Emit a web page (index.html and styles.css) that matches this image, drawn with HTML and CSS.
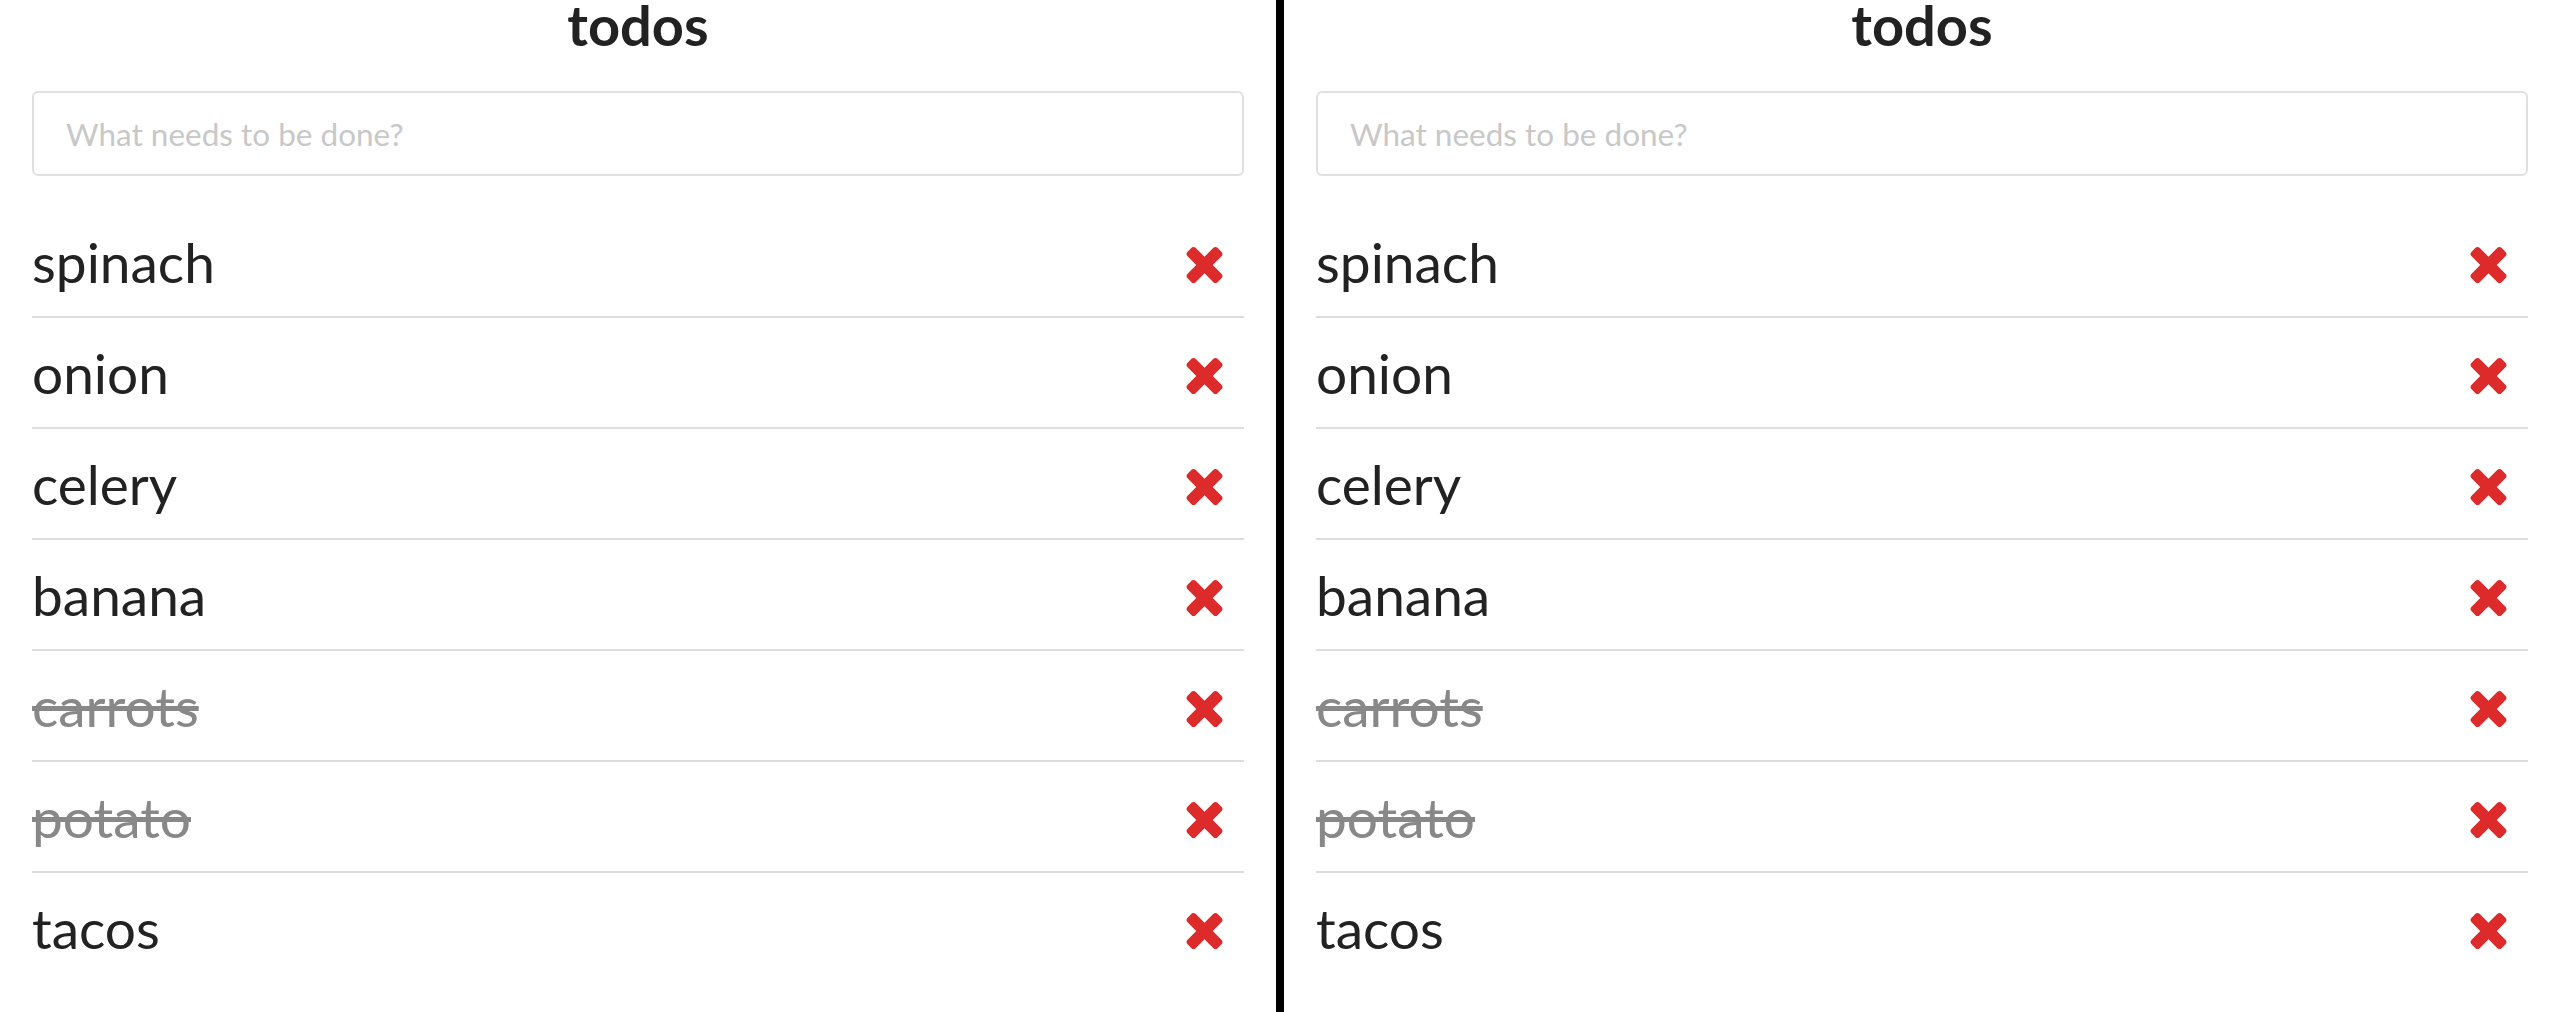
FILE: index.html
```html
<!DOCTYPE html>
<html>
<head>
<meta charset="utf-8">
<link rel="stylesheet" href="styles.css">
</head>
<body>
<section class="panel panel-left">
  <div class="app">
    <h1 class="title">todos</h1>
    <input class="new-todo" type="text" placeholder="What needs to be done?">
    <ul class="todo-list">
      <li class="todo"><span class="label">spinach</span><button class="destroy"><svg viewBox="110 366 1188 1188" width="37" height="36"><path d="M1298 1322q0 40-28 68l-136 136q-28 28-68 28t-68-28l-294-294-294 294q-28 28-68 28t-68-28l-136-136q-28-28-28-68t28-68l294-294-294-294q-28-28-28-68t28-68l136-136q28-28 68-28t68 28l294 294 294-294q28-28 68-28t68 28l136 136q28 28 28 68t-28 68l-294 294 294 294q28 28 28 68z"/></svg></button></li>
      <li class="todo"><span class="label">onion</span><button class="destroy"><svg viewBox="110 366 1188 1188" width="37" height="36"><path d="M1298 1322q0 40-28 68l-136 136q-28 28-68 28t-68-28l-294-294-294 294q-28 28-68 28t-68-28l-136-136q-28-28-28-68t28-68l294-294-294-294q-28-28-28-68t28-68l136-136q28-28 68-28t68 28l294 294 294-294q28-28 68-28t68 28l136 136q28 28 28 68t-28 68l-294 294 294 294q28 28 28 68z"/></svg></button></li>
      <li class="todo"><span class="label">celery</span><button class="destroy"><svg viewBox="110 366 1188 1188" width="37" height="36"><path d="M1298 1322q0 40-28 68l-136 136q-28 28-68 28t-68-28l-294-294-294 294q-28 28-68 28t-68-28l-136-136q-28-28-28-68t28-68l294-294-294-294q-28-28-28-68t28-68l136-136q28-28 68-28t68 28l294 294 294-294q28-28 68-28t68 28l136 136q28 28 28 68t-28 68l-294 294 294 294q28 28 28 68z"/></svg></button></li>
      <li class="todo"><span class="label">banana</span><button class="destroy"><svg viewBox="110 366 1188 1188" width="37" height="36"><path d="M1298 1322q0 40-28 68l-136 136q-28 28-68 28t-68-28l-294-294-294 294q-28 28-68 28t-68-28l-136-136q-28-28-28-68t28-68l294-294-294-294q-28-28-28-68t28-68l136-136q28-28 68-28t68 28l294 294 294-294q28-28 68-28t68 28l136 136q28 28 28 68t-28 68l-294 294 294 294q28 28 28 68z"/></svg></button></li>
      <li class="todo done"><span class="label">carrots</span><button class="destroy"><svg viewBox="110 366 1188 1188" width="37" height="36"><path d="M1298 1322q0 40-28 68l-136 136q-28 28-68 28t-68-28l-294-294-294 294q-28 28-68 28t-68-28l-136-136q-28-28-28-68t28-68l294-294-294-294q-28-28-28-68t28-68l136-136q28-28 68-28t68 28l294 294 294-294q28-28 68-28t68 28l136 136q28 28 28 68t-28 68l-294 294 294 294q28 28 28 68z"/></svg></button></li>
      <li class="todo done"><span class="label">potato</span><button class="destroy"><svg viewBox="110 366 1188 1188" width="37" height="36"><path d="M1298 1322q0 40-28 68l-136 136q-28 28-68 28t-68-28l-294-294-294 294q-28 28-68 28t-68-28l-136-136q-28-28-28-68t28-68l294-294-294-294q-28-28-28-68t28-68l136-136q28-28 68-28t68 28l294 294 294-294q28-28 68-28t68 28l136 136q28 28 28 68t-28 68l-294 294 294 294q28 28 28 68z"/></svg></button></li>
      <li class="todo"><span class="label">tacos</span><button class="destroy"><svg viewBox="110 366 1188 1188" width="37" height="36"><path d="M1298 1322q0 40-28 68l-136 136q-28 28-68 28t-68-28l-294-294-294 294q-28 28-68 28t-68-28l-136-136q-28-28-28-68t28-68l294-294-294-294q-28-28-28-68t28-68l136-136q28-28 68-28t68 28l294 294 294-294q28-28 68-28t68 28l136 136q28 28 28 68t-28 68l-294 294 294 294q28 28 28 68z"/></svg></button></li>
    </ul>
  </div>
</section>
<div class="divider"></div>
<section class="panel panel-right">
  <div class="app">
    <h1 class="title">todos</h1>
    <input class="new-todo" type="text" placeholder="What needs to be done?">
    <ul class="todo-list">
      <li class="todo"><span class="label">spinach</span><button class="destroy"><svg viewBox="110 366 1188 1188" width="37" height="36"><path d="M1298 1322q0 40-28 68l-136 136q-28 28-68 28t-68-28l-294-294-294 294q-28 28-68 28t-68-28l-136-136q-28-28-28-68t28-68l294-294-294-294q-28-28-28-68t28-68l136-136q28-28 68-28t68 28l294 294 294-294q28-28 68-28t68 28l136 136q28 28 28 68t-28 68l-294 294 294 294q28 28 28 68z"/></svg></button></li>
      <li class="todo"><span class="label">onion</span><button class="destroy"><svg viewBox="110 366 1188 1188" width="37" height="36"><path d="M1298 1322q0 40-28 68l-136 136q-28 28-68 28t-68-28l-294-294-294 294q-28 28-68 28t-68-28l-136-136q-28-28-28-68t28-68l294-294-294-294q-28-28-28-68t28-68l136-136q28-28 68-28t68 28l294 294 294-294q28-28 68-28t68 28l136 136q28 28 28 68t-28 68l-294 294 294 294q28 28 28 68z"/></svg></button></li>
      <li class="todo"><span class="label">celery</span><button class="destroy"><svg viewBox="110 366 1188 1188" width="37" height="36"><path d="M1298 1322q0 40-28 68l-136 136q-28 28-68 28t-68-28l-294-294-294 294q-28 28-68 28t-68-28l-136-136q-28-28-28-68t28-68l294-294-294-294q-28-28-28-68t28-68l136-136q28-28 68-28t68 28l294 294 294-294q28-28 68-28t68 28l136 136q28 28 28 68t-28 68l-294 294 294 294q28 28 28 68z"/></svg></button></li>
      <li class="todo"><span class="label">banana</span><button class="destroy"><svg viewBox="110 366 1188 1188" width="37" height="36"><path d="M1298 1322q0 40-28 68l-136 136q-28 28-68 28t-68-28l-294-294-294 294q-28 28-68 28t-68-28l-136-136q-28-28-28-68t28-68l294-294-294-294q-28-28-28-68t28-68l136-136q28-28 68-28t68 28l294 294 294-294q28-28 68-28t68 28l136 136q28 28 28 68t-28 68l-294 294 294 294q28 28 28 68z"/></svg></button></li>
      <li class="todo done"><span class="label">carrots</span><button class="destroy"><svg viewBox="110 366 1188 1188" width="37" height="36"><path d="M1298 1322q0 40-28 68l-136 136q-28 28-68 28t-68-28l-294-294-294 294q-28 28-68 28t-68-28l-136-136q-28-28-28-68t28-68l294-294-294-294q-28-28-28-68t28-68l136-136q28-28 68-28t68 28l294 294 294-294q28-28 68-28t68 28l136 136q28 28 28 68t-28 68l-294 294 294 294q28 28 28 68z"/></svg></button></li>
      <li class="todo done"><span class="label">potato</span><button class="destroy"><svg viewBox="110 366 1188 1188" width="37" height="36"><path d="M1298 1322q0 40-28 68l-136 136q-28 28-68 28t-68-28l-294-294-294 294q-28 28-68 28t-68-28l-136-136q-28-28-28-68t28-68l294-294-294-294q-28-28-28-68t28-68l136-136q28-28 68-28t68 28l294 294 294-294q28-28 68-28t68 28l136 136q28 28 28 68t-28 68l-294 294 294 294q28 28 28 68z"/></svg></button></li>
      <li class="todo"><span class="label">tacos</span><button class="destroy"><svg viewBox="110 366 1188 1188" width="37" height="36"><path d="M1298 1322q0 40-28 68l-136 136q-28 28-68 28t-68-28l-294-294-294 294q-28 28-68 28t-68-28l-136-136q-28-28-28-68t28-68l294-294-294-294q-28-28-28-68t28-68l136-136q28-28 68-28t68 28l294 294 294-294q28-28 68-28t68 28l136 136q28 28 28 68t-28 68l-294 294 294 294q28 28 28 68z"/></svg></button></li>
    </ul>
  </div>
</section>
</body>
</html>
```

FILE: styles.css
```css
html, body {
  margin: 0;
  padding: 0;
  background: #ffffff;
}

body {
  display: flex;
  height: 1012px;
  overflow: hidden;
  font-family: Lato, "Noto Sans", sans-serif;
  color: #222222;
}

.panel {
  box-sizing: border-box;
  padding: 0 32px;
  overflow: hidden;
}

.panel-left {
  width: 1276px;
  flex: none;
}

.panel-right {
  flex: 1;
  padding-right: 0;
}

.divider {
  width: 8px;
  flex: none;
  background: #000000;
}

.app {
  width: 1212px;
  display: flex;
  flex-direction: column;
}

.title {
  margin: 0;
  padding-top: 3px;
  font-size: 56px;
  font-weight: 700;
  line-height: 44px;
  text-align: center;
  color: #222222;
}

.new-todo {
  box-sizing: border-box;
  margin-top: 44px;
  height: 85px;
  width: 100%;
  border: 2px solid #e0e0e0;
  border-radius: 6px;
  padding: 0 32px;
  font-family: Lato, "Noto Sans", sans-serif;
  font-size: 31.5px;
  color: #222222;
  outline: none;
}

.new-todo::placeholder {
  color: #c8c8c8;
}

.todo-list {
  list-style: none;
  margin: 31px 0 0 0;
  padding: 0;
}

.todo {
  display: flex;
  align-items: center;
  justify-content: space-between;
  height: 109px;
}

.todo + .todo {
  border-top: 2px solid #dddddd;
}

.label {
  font-size: 55px;
  line-height: normal;
  color: #222222;
}

.done .label {
  color: #888888;
  text-decoration: line-through;
}

.destroy {
  display: flex;
  border: none;
  background: none;
  padding: 0;
  margin: 6px 21px 0 0;
  fill: #dd2a2a;
  cursor: pointer;
}
```
